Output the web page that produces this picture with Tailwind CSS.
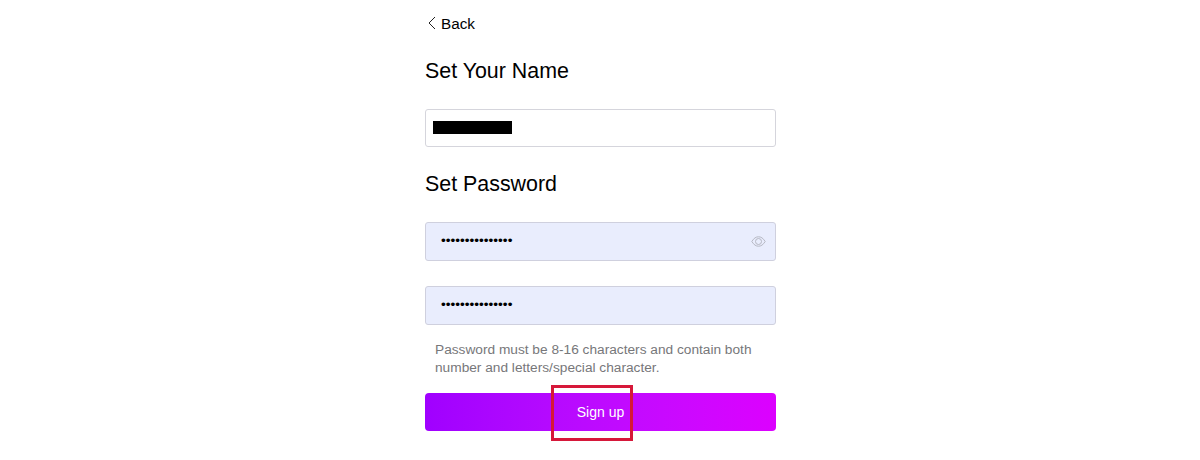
<!DOCTYPE html>
<html lang="en">
<head>
    <meta charset="UTF-8">
    <title>Sign up</title>
    <script src="https://cdn.jsdelivr.net/npm/@tailwindcss/browser@4"></script>
</head>
<body class="bg-white text-black font-['Liberation_Sans',Arial,sans-serif]">
    <main class="w-[351px] ml-[425px] h-[460px] overflow-hidden">
        <!-- Back -->
        <a href="#" class="flex items-center gap-[5px] h-[16px] mt-[15px] pl-[3px] text-[15.3px] leading-[16px]">
            <svg class="w-[8px] h-[14px]" viewBox="0 0 8 14" fill="none" stroke="#222" stroke-width="1">
                <path d="M7 1 L1 7 L7 13"/>
            </svg>
            <span class="mt-[1px]">Back</span>
        </a>

        <h2 class="mt-[27px] text-[21.4px] leading-[26px]">Set Your Name</h2>
        <div class="mt-[25px] h-[38px] flex items-center px-[7px] bg-white border border-[#d5d5dc] rounded-[3px]">
            <div class="w-[79px] h-[13px] mb-[2px] bg-black"></div>
        </div>

        <h2 class="mt-[24px] text-[21.4px] leading-[26px]">Set Password</h2>
        <div class="mt-[25px] h-[39px] flex items-center justify-between pl-[15px] pr-[9px] bg-[#e9edfd] border border-[#cfd0de] rounded-[3px]">
            <span class="text-[13.6px]">•••••••••••••••</span>
            <svg class="w-[15px] h-[11px]" viewBox="0 0 15 11" fill="none" stroke="#b5b7c2" stroke-width="1">
                <path d="M.8 5.5C3 2 5 .8 7.5 .8S12 2 14.2 5.5C12 9 10 10.2 7.5 10.2S3 9 .8 5.5Z"/>
                <circle cx="7.5" cy="5.5" r="3"/>
            </svg>
        </div>
        <div class="mt-[25px] h-[39px] flex items-center pl-[15px] bg-[#e9edfd] border border-[#cfd0de] rounded-[3px]">
            <span class="text-[13.6px]">•••••••••••••••</span>
        </div>

        <p class="mt-[16px] px-[10px] text-[13.7px] leading-[18px] text-[#77777a]">Password must be 8-16 characters and contain both number and letters/special character.</p>

        <button class="mt-[16px] w-full h-[38px] rounded-[4px] text-white text-[14px] bg-gradient-to-r from-[#a000ff] to-[#dc00ff]">Sign up</button>
    </main>

    <!-- highlight box over the button -->
    <div class="absolute left-[551px] top-[385px] w-[82px] h-[56px] border-[3px] border-[#d6183a]"></div>
</body>
</html>
